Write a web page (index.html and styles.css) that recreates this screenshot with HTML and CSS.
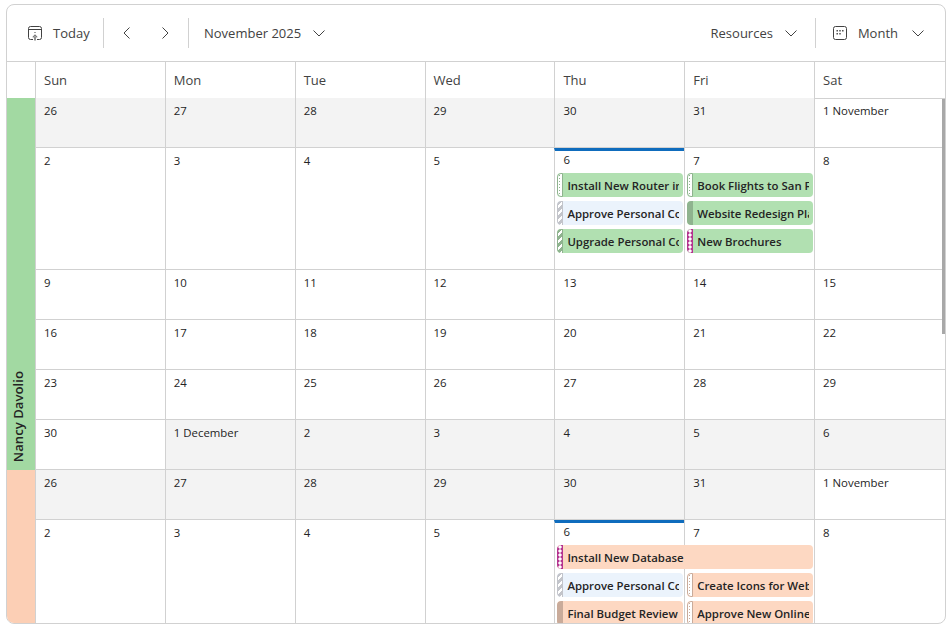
FILE: index.html
```html
<!DOCTYPE html>
<html lang="en">
<head>
<meta charset="utf-8">
<title>Scheduler</title>
<link rel="stylesheet" href="styles.css">
</head>
<body>
<div class="scheduler">
  <div class="toolbar">
    <div class="tool tool-today">
      <svg class="ico" width="16" height="16" viewBox="0 0 16 16" fill="none" stroke="#424242"><path d="M6 14.5H3.5a2 2 0 0 1-2-2v-9a2 2 0 0 1 2-2h9a2 2 0 0 1 2 2v9a2 2 0 0 1-2 2H10"/><path d="M1.5 4.5h13"/><path d="M7.5 7.5h1"/><path d="M8 15.5v-4" stroke="#777" stroke-width="1.6"/><path d="M5.8 12.4 8 10.2l2.2 2.2" stroke="#777" stroke-width="1.2"/></svg>
      <span>Today</span>
    </div>
    <div class="sep"></div>
    <div class="nav-group">
      <div class="tool tool-nav">
        <svg width="16" height="16" viewBox="0 0 16 16" fill="none" stroke="#424242"><path d="M10.5 2.5 5 8l5.5 5.5"/></svg>
      </div>
      <div class="tool tool-nav">
        <svg width="16" height="16" viewBox="0 0 16 16" fill="none" stroke="#424242"><path d="M5.5 2.5 11 8l-5.5 5.5"/></svg>
      </div>
    </div>
    <div class="sep"></div>
    <div class="tool tool-date">
      <span>November 2025</span>
      <svg class="chev" width="14" height="14" viewBox="0 0 14 14" fill="none" stroke="#424242"><path d="M1.5 4.5 7 10l5.5-5.5"/></svg>
    </div>
    <div class="spacer"></div>
    <div class="tool tool-res">
      <span>Resources</span>
      <svg class="chev" width="14" height="14" viewBox="0 0 14 14" fill="none" stroke="#424242"><path d="M1.5 4.5 7 10l5.5-5.5"/></svg>
    </div>
    <div class="sep"></div>
    <div class="tool tool-month">
      <svg class="ico" width="16" height="16" viewBox="0 0 16 16" fill="none" stroke="#424242"><rect x="1.5" y="1.5" width="13" height="13" rx="2"/><path d="M4.5 5.8h1.4M7.3 5.8h1.4M10.1 5.8h1.4M4.5 8.8h1.4M7.3 8.8h1.4" stroke-width="1.4"/></svg>
      <span>Month</span>
      <svg class="chev" width="14" height="14" viewBox="0 0 14 14" fill="none" stroke="#424242"><path d="M1.5 4.5 7 10l5.5-5.5"/></svg>
    </div>
  </div>
  <div class="head">
    <div class="head-corner"></div>
    <div class="head-cell">Sun</div>
    <div class="head-cell">Mon</div>
    <div class="head-cell">Tue</div>
    <div class="head-cell">Wed</div>
    <div class="head-cell">Thu</div>
    <div class="head-cell">Fri</div>
    <div class="head-cell">Sat</div>
  </div>
  <div class="body">
    <div class="res res-green"><span>Nancy Davolio</span></div>
    <div class="cell off">26</div><div class="cell off">27</div><div class="cell off">28</div><div class="cell off">29</div><div class="cell off">30</div><div class="cell off">31</div><div class="cell">1 November</div>
    <div class="cell">2</div><div class="cell">3</div><div class="cell">4</div><div class="cell">5</div>
    <div class="cell today">6
      <div class="ev ev-green"><i class="bar dots"></i><span>Install New Router in Dev Room</span></div>
      <div class="ev ev-blue"><i class="bar stripes-grey"></i><span>Approve Personal Computer Upgrade Plan</span></div>
      <div class="ev ev-green"><i class="bar stripes-green"></i><span>Upgrade Personal Computers</span></div>
    </div>
    <div class="cell">7
      <div class="ev ev-green"><i class="bar dots"></i><span>Book Flights to San Fransisco for Sales Trip</span></div>
      <div class="ev ev-green"><i class="bar solid-green"></i><span>Website Redesign Plan</span></div>
      <div class="ev ev-green"><i class="bar cross"></i><span>New Brochures</span></div>
    </div>
    <div class="cell">8</div>
    <div class="cell">9</div><div class="cell">10</div><div class="cell">11</div><div class="cell">12</div><div class="cell">13</div><div class="cell">14</div><div class="cell">15</div>
    <div class="cell">16</div><div class="cell">17</div><div class="cell">18</div><div class="cell">19</div><div class="cell">20</div><div class="cell">21</div><div class="cell">22</div>
    <div class="cell">23</div><div class="cell">24</div><div class="cell">25</div><div class="cell">26</div><div class="cell">27</div><div class="cell">28</div><div class="cell">29</div>
    <div class="cell">30</div><div class="cell off">1 December</div><div class="cell off">2</div><div class="cell off">3</div><div class="cell off">4</div><div class="cell off">5</div><div class="cell off">6</div>
    <div class="res res-peach"></div>
    <div class="cell off">26</div><div class="cell off">27</div><div class="cell off">28</div><div class="cell off">29</div><div class="cell off">30</div><div class="cell off">31</div><div class="cell">1 November</div>
    <div class="cell">2</div><div class="cell">3</div><div class="cell">4</div><div class="cell">5</div>
    <div class="cell today">6
      <div class="ev ev-peach ev-wide"><i class="bar cross"></i><span>Install New Database</span></div>
      <div class="ev ev-blue"><i class="bar stripes-grey"></i><span>Approve Personal Computer Upgrade Plan</span></div>
      <div class="ev ev-peach"><i class="bar solid-peach"></i><span>Final Budget Review</span></div>
    </div>
    <div class="cell">7
      <div class="ev ev-spaced ev-peach"><i class="bar dots-peach"></i><span>Create Icons for Website</span></div>
      <div class="ev ev-peach"><i class="bar dots-peach"></i><span>Approve New Online Marketing Strategy</span></div>
    </div>
    <div class="cell">8</div>
    <div class="thumb"></div>
  </div>
</div>
</body>
</html>
```
FILE: styles.css
```css
* { box-sizing: border-box; }
html, body { margin: 0; padding: 0; height: 100%; background: #fff; }
body { padding: 4px 4px 5px 6px; font-family: "Open Sans", "Noto Sans", sans-serif; color: #242424; }
.scheduler {
  height: 100%;
  border: 1px solid #d1d1d1;
  border-radius: 8px;
  overflow: hidden;
  display: flex;
  flex-direction: column;
}
.toolbar {
  flex: none;
  height: 57px;
  display: flex;
  align-items: center;
  padding-left: 20px;
  border-bottom: 1px solid #d1d1d1;
  font-size: 13px;
  color: #424242;
}
.tool { display: flex; align-items: center; }
.tool-today { width: 76px; }
.tool-today .ico { margin-right: 10px; }
.nav-group { display: flex; margin: 0 4px; }
.tool-nav { width: 38px; justify-content: center; }
.tool-date { margin-left: 15px; }
.tool-date .chev { margin-left: 11px; }
.tool-res .chev { margin-left: 11px; }
.tool-res { margin-right: 17px; }
.tool-month { margin-left: 16px; margin-right: 20px; }
.tool-month .ico { margin-right: 10px; }
.tool-month .chev { margin-left: 13px; }
.sep { width: 1px; height: 30px; background: #d1d1d1; }
.spacer { flex: 1; }
.head, .body {
  display: grid;
  grid-template-columns: 28px repeat(6, calc((100% - 29px) / 7)) 1fr;
}
.head { flex: none; height: 36px; }
.head-corner { border-bottom: 1px solid #d1d1d1; }
.head-cell {
  border-left: 1px solid #d1d1d1;
  border-bottom: 1px solid #d1d1d1;
  padding: 0 8px;
  font-size: 13px;
  line-height: 36px;
  color: #424242;
}
.body {
  flex: 1;
  min-height: 0;
  overflow: hidden;
  position: relative;
  grid-template-rows: 50px 122px 50px 50px 50px 50px 50px 122px;
}
.res { grid-column: 1; display: flex; align-items: flex-end; justify-content: flex-start; }
.res-green { grid-row: 1 / span 6; background: #a2d9a2; }
.res-peach { grid-row: 7 / span 2; background: #fccfb5; }
.res span {
  writing-mode: vertical-rl;
  transform: rotate(180deg);
  font-size: 13.2px;
  font-weight: 600;
  line-height: 22px;
  padding-top: 8px;
  white-space: nowrap;
}
.cell {
  min-width: 0;
  border-left: 1px solid #d1d1d1;
  border-bottom: 1px solid #d1d1d1;
  padding: 5px 0 0 8px;
  font-size: 11.4px;
  line-height: 16px;
  position: relative;
}
.off { background: #f3f3f3; }
.today { border-top: 3px solid #0f6cbd; padding-top: 1px; }
.ev {
  display: flex;
  height: 24px;
  margin: 0 1px 4px -6px;
  border-radius: 4px;
  overflow: hidden;
  font-size: 11.4px;
  font-weight: 600;
  line-height: 25px;
  position: relative;
  z-index: 1;
}
.cell > .ev:first-of-type { margin-top: 4px; }
.today > .ev:first-of-type { margin-top: 5px; }
.cell > .ev-spaced:first-of-type { margin-top: 32px; }
.ev-wide { margin-right: -129px; }
.ev span { flex: 1; min-width: 0; margin: 0 4px; overflow: hidden; white-space: nowrap; }
.ev-green { background: #b1e0b1; }
.ev-blue { background: #ebf3fc; }
.ev-peach { background: #fdd8c2; }
.bar { flex: none; width: 6px; border-radius: 4px 0 0 4px; }
.dots {
  border: 1px solid #8fb38f;
  background: #fff radial-gradient(circle, #8fb38f 0.7px, transparent 0.8px) 0 0 / 3px 3px;
}
.dots-peach {
  border: 1px solid #c9ab9a;
  background: #fff radial-gradient(circle, #c9ab9a 0.7px, transparent 0.8px) 0 0 / 3px 3px;
}
.stripes-grey {
  border-left: 1px solid #c2c4ca;
  border-right: 1px solid #c2c4ca;
  background: repeating-linear-gradient(135deg, #c2c4ca 0 3px, #fff 3px 5px);
}
.stripes-green {
  border-left: 1px solid #8fb38f;
  border-right: 1px solid #8fb38f;
  background: repeating-linear-gradient(135deg, #8fb38f 0 3px, #fff 3px 5px);
}
.solid-green { background: #8fb38f; }
.solid-peach { background: #c9ab9a; }
.cross {
  background:
    radial-gradient(circle at 3px 2px, #fff 1.5px, transparent 1.7px) 0 0 / 6px 4px,
    #b4338f;
}
.thumb {
  position: absolute;
  top: 1px;
  right: 0;
  width: 3px;
  height: 235px;
  background: #a8a8a8;
}
```
